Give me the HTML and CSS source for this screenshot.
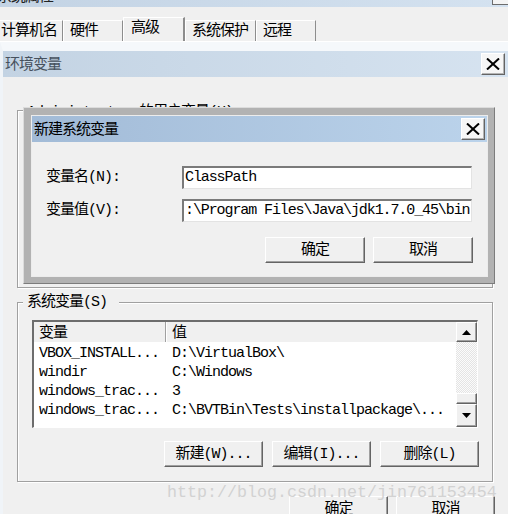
FILE: index.html
```html
<!DOCTYPE html>
<html>
<head>
	<title>环境变量</title>
	<meta charset="utf-8">
	<link rel="stylesheet" href="styles.css">
</head>
<body>
	<div class="sys-title">
		<span class="sys-title-text">系统属性</span>
		<span class="sys-close"></span>
	</div>
	<div class="tabs">
		<div class="tab t1">计算机名</div>
		<div class="tab t2">硬件</div>
		<div class="tab t3 on">高级</div>
		<div class="tab t4">系统保护</div>
		<div class="tab t5">远程</div>
	</div>

	<div class="env">
		<div class="env-title">
			<span class="caption">环境变量</span>
			<button class="close">
				<svg width="14" height="12" viewBox="0 0 14 12"><path d="M1 0.5 L13 11.5 M13 0.5 L1 11.5" stroke="#000" stroke-width="2"/></svg>
			</button>
		</div>
		<div class="env-body">
			<fieldset class="group user">
				<legend>Administrator 的用户变量(U)</legend>
			</fieldset>
			<fieldset class="group sys">
				<legend>系统变量(S)</legend>
				<div class="group-body">
					<div class="list">
						<div class="list-main">
							<div class="list-head"><span class="c1">变量</span><span class="c2">值</span></div>
							<div class="row"><span class="c1">VBOX_INSTALL...</span><span class="c2">D:\VirtualBox\</span></div>
							<div class="row"><span class="c1">windir</span><span class="c2">C:\Windows</span></div>
							<div class="row"><span class="c1">windows_trac...</span><span class="c2">3</span></div>
							<div class="row"><span class="c1">windows_trac...</span><span class="c2">C:\BVTBin\Tests\installpackage\...</span></div>
						</div>
						<div class="vscroll">
							<div class="sb-btn up"><svg width="9" height="5" viewBox="0 0 9 5"><polygon points="0,5 9,5 4.5,0" fill="#000"/></svg></div>
							<div class="sb-track"></div>
							<div class="sb-thumb"></div>
							<div class="sb-btn down"><svg width="9" height="5" viewBox="0 0 9 5"><polygon points="0,0 9,0 4.5,5" fill="#000"/></svg></div>
						</div>
					</div>
					<div class="btn-row">
						<button class="btn">新建(W)...</button>
						<button class="btn">编辑(I)...</button>
						<button class="btn">删除(L)</button>
					</div>
				</div>
			</fieldset>
			<div class="btn-row env-btns">
				<button class="btn">确定</button>
				<button class="btn">取消</button>
			</div>

			<div class="dialog">
				<div class="dlg-inner">
					<div class="dlg-title">
						<span class="caption">新建系统变量</span>
						<button class="close">
							<svg width="14" height="12" viewBox="0 0 14 12"><path d="M1 0.5 L13 11.5 M13 0.5 L1 11.5" stroke="#000" stroke-width="2"/></svg>
						</button>
					</div>
					<div class="dlg-body">
						<div class="field">
							<label>变量名(N):</label>
							<div class="input">ClassPath</div>
						</div>
						<div class="field">
							<label>变量值(V):</label>
							<div class="input">:\Program Files\Java\jdk1.7.0_45\bin</div>
						</div>
						<div class="btn-row">
							<button class="btn">确定</button>
							<button class="btn">取消</button>
						</div>
					</div>
				</div>
			</div>
		</div>
	</div>

	<div class="watermark">http://blog.csdn.net/jin761153454</div>
</body>
</html>
```

FILE: styles.css
```css
html, body {
	margin: 0;
	padding: 0;
}
body {
	width: 508px;
	height: 514px;
	overflow: hidden;
	position: relative;
	background: #f0f0f0;
	color: #000;
	font-family: "Liberation Mono", "Noto Sans CJK SC", monospace;
	font-size: 15px;
	line-height: 17px;
	letter-spacing: -1px;
}
button {
	font: inherit;
	line-height: 17px;
	letter-spacing: inherit;
	color: inherit;
	padding: 0;
	margin: 0;
}

/* outer window, mostly off screen */
.sys-title {
	height: 7px;
	overflow: hidden;
	display: flex;
	justify-content: space-between;
	background: linear-gradient(to right, #c3d3e4, #d4e2f0);
}
.sys-title-text {
	margin-top: -11px;
	margin-left: -3px;
	color: #222;
}
.sys-close {
	width: 15px;
	height: 4px;
	background: #f4f4f4;
	border-left: 1px solid #6d6d6d;
	border-bottom: 1px solid #6d6d6d;
}

.tabs {
	display: flex;
	align-items: flex-end;
	height: 24px;
	margin-top: 10px;
	margin-left: -6px;
	border-bottom: 1px solid #fff;
}
.tab {
	box-sizing: border-box;
	height: 21px;
	padding-left: 6px;
	line-height: 21px;
	border-top: 1px solid #fff;
	border-left: 1px solid #fff;
	border-right: 1px solid #8d8d8d;
}
.tab.on {
	height: 24px;
	line-height: 22px;
	padding-left: 7px;
	border-right: 2px solid #8d8d8d;
}
.t1 { width: 69px; }
.t2 { width: 60px; }
.t3 { width: 62px; }
.t4 { width: 71px; }
.t5 { width: 60px; }

/* environment variables window */
.env {
	border-top: 9px solid #f5f8fb;
	border-left: 3px solid #f0f4f8;
}
.env-title {
	height: 26px;
	display: flex;
	align-items: center;
	justify-content: space-between;
	padding: 0 3px 0 2px;
	background: linear-gradient(to right, #c3d3e3, #d6e3f0);
	color: #46515d;
}
.caption {
	padding-top: 3px;
}
.close {
	box-sizing: border-box;
	width: 24px;
	height: 22px;
	display: flex;
	align-items: center;
	justify-content: center;
	background: #f6f6f6;
	border: 1px solid;
	border-color: #fff #646464 #646464 #fff;
	box-shadow: inset -1px -1px #b4b4b4;
}
.env-body {
	position: relative;
	height: 437px;
	padding: 23px 0 0 14px;
	box-sizing: border-box;
}

.group {
	margin: 0;
	padding: 0;
	width: 476px;
	box-sizing: border-box;
	min-width: 0;
	border: 1px solid #a0a0a0;
	box-shadow: inset 1px 1px #fff, 1px 1px #fff;
}
.group legend {
	padding: 0 12px 0 4px;
	margin-left: 5px;
	background: #f0f0f0;
}
.user {
	height: 188px;
}
.user legend {
	padding-top: 4px;
}
.sys {
	margin-top: 6px;
}
.group-body {
	padding: 9px 13px 14px 14px;
}

.list {
	display: flex;
	width: 446px;
	height: 108px;
	box-sizing: border-box;
	border-style: solid;
	border-width: 2px 1px 1px 2px;
	border-color: #6d6d6d #fff #fff #6d6d6d;
	background: #fff;
}
.list-main {
	flex: 1;
	overflow: hidden;
	white-space: nowrap;
}
.list-head {
	height: 20px;
	display: flex;
	line-height: 24px;
	background: #f0f0f0;
}
.list-head .c1 {
	border-right: 1px solid #a0a0a0;
	box-shadow: 1px 0 #fff;
}
.c1 {
	box-sizing: border-box;
	width: 132px;
	padding-left: 5px;
}
.c2 {
	padding-left: 6px;
}
.row {
	display: flex;
	height: 19px;
	line-height: 24px;
}
.vscroll {
	width: 21px;
	display: flex;
	flex-direction: column;
}
.sb-btn, .sb-thumb {
	box-sizing: border-box;
	display: flex;
	align-items: center;
	justify-content: center;
	background: #f0f0f0;
	border: 1px solid;
	border-color: #fff #646464 #646464 #fff;
	box-shadow: inset -1px -1px #a0a0a0;
}
.sb-btn.up { height: 20px; }
.sb-btn.down { height: 23px; }
.sb-thumb { height: 11px; }
.sb-track {
	height: 51px;
	background: repeating-conic-gradient(#e4e4e4 0 25%, #fbfbfb 0 50%) 0 0 / 2px 2px;
}

.btn-row {
	display: flex;
	justify-content: flex-end;
	gap: 9px;
	margin-top: 13px;
}
.btn {
	box-sizing: border-box;
	width: 99px;
	height: 26px;
	background: #f0f0f0;
	border: 1px solid;
	border-color: #fff #646464 #646464 #fff;
	box-shadow: inset -1px -1px #a0a0a0;
}
.env-btns {
	width: 478px;
	gap: 8px;
	margin-top: 14px;
}

/* new system variable dialog, on top */
.dialog {
	position: absolute;
	left: 20px;
	top: 30px;
	width: 472px;
	height: 177px;
	box-sizing: border-box;
	padding: 7px 6px 6px 7px;
	background: #b2b2b2;
	border: 1px solid;
	border-color: #dcdcdc #7c7c7c #7c7c7c #dcdcdc;
}
.dlg-inner {
	height: 100%;
	background: #f0f0f0;
	border: 1px solid #ececec;
	box-sizing: border-box;
}
.dlg-title {
	height: 26px;
	display: flex;
	align-items: center;
	justify-content: space-between;
	padding: 0 2px 0 2px;
	background: linear-gradient(to right, #a2bbd7, #bbd3eb);
}
.dlg-body {
	padding: 24px 14px 0 14px;
}
.field {
	display: flex;
	align-items: center;
	height: 23px;
	margin-bottom: 10px;
}
.field label {
	width: 136px;
}
.input {
	box-sizing: border-box;
	width: 290px;
	height: 23px;
	line-height: 20px;
	padding-left: 1px;
	letter-spacing: -1.1px;
	background: #fff;
	overflow: hidden;
	white-space: nowrap;
	border-style: solid;
	border-width: 2px 1px 1px 2px;
	border-color: #7a7a7a #e3e3e3 #e3e3e3 #7a7a7a;
}
.dlg-body .btn-row {
	gap: 8px;
	margin-top: 15px;
}
.dlg-body .btn {
	width: 100px;
}

.watermark {
	position: absolute;
	left: 167px;
	top: 484px;
	font-size: 16.67px;
	letter-spacing: 0;
	line-height: 17px;
	color: #d2d2d2;
}
```
